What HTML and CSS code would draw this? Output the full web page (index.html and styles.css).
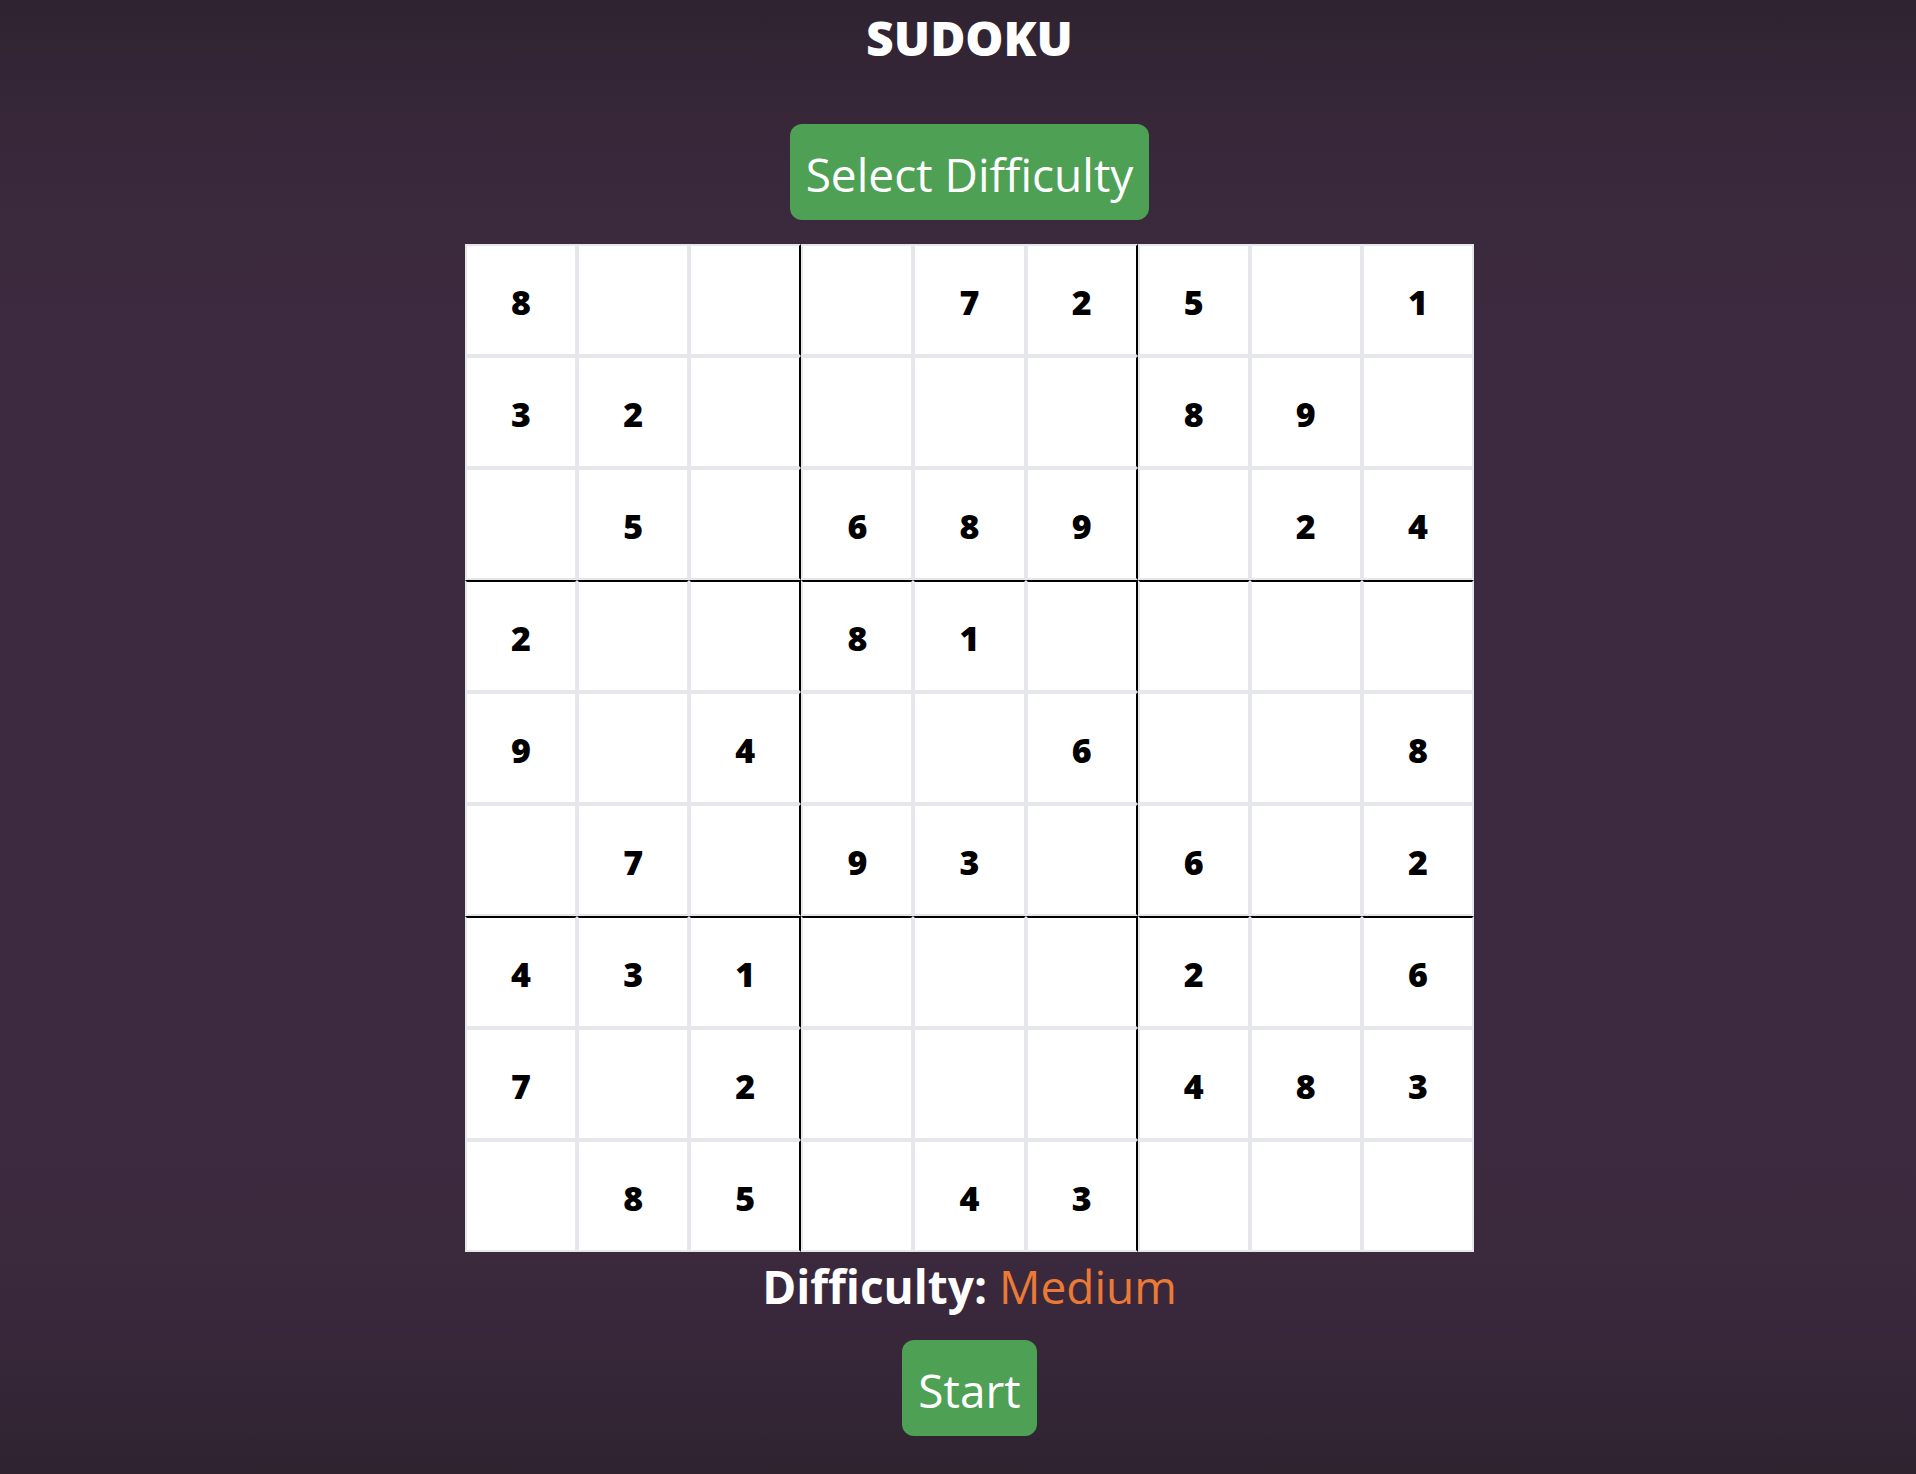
FILE: index.html
```html
<!DOCTYPE html>
<html lang="en">
<head>
<meta charset="utf-8">
<meta name="viewport" content="width=device-width, initial-scale=1">
<title>Sudoku</title>
<link rel="stylesheet" href="styles.css">
</head>
<body>
<main class="game">
  <h1 class="title">SUDOKU</h1>
  <button class="button" type="button">Select Difficulty</button>
  <table class="board" aria-label="Sudoku board">
    <tbody>
      <tr><td>8</td><td></td><td></td><td></td><td>7</td><td>2</td><td>5</td><td></td><td>1</td></tr>
      <tr><td>3</td><td>2</td><td></td><td></td><td></td><td></td><td>8</td><td>9</td><td></td></tr>
      <tr><td></td><td>5</td><td></td><td>6</td><td>8</td><td>9</td><td></td><td>2</td><td>4</td></tr>
      <tr><td>2</td><td></td><td></td><td>8</td><td>1</td><td></td><td></td><td></td><td></td></tr>
      <tr><td>9</td><td></td><td>4</td><td></td><td></td><td>6</td><td></td><td></td><td>8</td></tr>
      <tr><td></td><td>7</td><td></td><td>9</td><td>3</td><td></td><td>6</td><td></td><td>2</td></tr>
      <tr><td>4</td><td>3</td><td>1</td><td></td><td></td><td></td><td>2</td><td></td><td>6</td></tr>
      <tr><td>7</td><td></td><td>2</td><td></td><td></td><td></td><td>4</td><td>8</td><td>3</td></tr>
      <tr><td></td><td>8</td><td>5</td><td></td><td>4</td><td>3</td><td></td><td></td><td></td></tr>
    </tbody>
  </table>
  <p class="status"><strong>Difficulty:</strong> <span class="level">Medium</span></p>
  <button class="button" type="button">Start</button>
</main>
</body>
</html>
```

FILE: styles.css
```css
* {
  box-sizing: border-box;
}

body {
  margin: 0;
  font-family: "Segoe UI", "Open Sans", "Noto Sans", sans-serif;
  font-size: 46px;
  line-height: 64px;
  color: #fff;
}

/* Soft dark falloff along the top and bottom edges */
.game {
  --fade: rgb(33 28 32 / 50%), rgb(33 28 32 / 31%) 78px, rgb(33 28 32 / 16%) 155px,
    rgb(33 28 32 / 7%) 233px, rgb(33 28 32 / 2%) 310px, rgb(33 28 32 / 0%) 390px;
  display: flex;
  flex-direction: column;
  align-items: center;
  min-height: 100vh;
  padding: 6px 0 36px 23px;
  background:
    linear-gradient(to bottom, var(--fade)),
    linear-gradient(to top, var(--fade)),
    #3d2a40;
}

.title {
  margin: 0 0 54px;
  font-size: 48px;
  font-weight: 800;
}

.button {
  padding: 18px 16px 14px;
  border: 0;
  border-radius: 12px;
  background: #4ea154;
  color: inherit;
  font: inherit;
  cursor: pointer;
}

.board {
  width: 1009px;
  max-width: 100%;
  margin-top: 24px;
  table-layout: fixed;
  border-collapse: separate;
  border-spacing: 0;
  background: #fff;
  color: #000;
  font-size: 34px;
  font-weight: 800;
}

.board td {
  height: 112px;
  padding: 4px 0 0;
  border: 2px solid #e5e7eb;
  text-align: center;
}

.board td:nth-child(3),
.board td:nth-child(6) {
  border-right-color: #000;
}

.board tr:nth-child(4) td,
.board tr:nth-child(7) td {
  border-top-color: #000;
}

.status {
  margin: 2px 0 22px;
}

.level {
  color: #ea7a35;
}
```
